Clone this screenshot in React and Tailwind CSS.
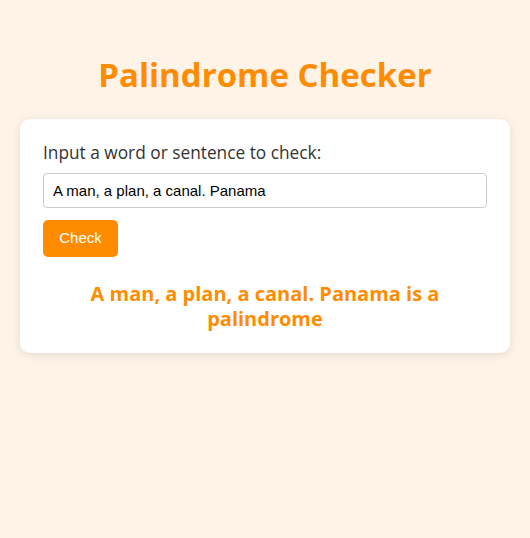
import { useState } from "react";

const isPalindrome = (s) => {
  const clean = s.toLowerCase().replace(/[^a-z0-9]/g, "");
  return clean === clean.split("").reverse().join("");
};

export default function App() {
  const [text, setText] = useState("A man, a plan, a canal. Panama");
  const [result, setResult] = useState(
    "A man, a plan, a canal. Panama is a palindrome"
  );

  const check = () => {
    if (!text.trim()) return;
    setResult(`${text} ${isPalindrome(text) ? "is" : "is not"} a palindrome`);
  };

  return (
    <div className="min-h-[538px] bg-[#fdf3e6] px-5 pt-[53px] font-['Open_Sans',sans-serif]">
      <h1 className="text-center text-[33px] font-bold leading-[44px] text-[#ff8c00]">
        Palindrome Checker
      </h1>
      <div className="mt-[22px] rounded-[10px] bg-white px-[23px] pt-[22px] pb-[22px] shadow-[0_2px_10px_rgba(0,0,0,0.1)]">
        <label className="block text-[17.3px] leading-6 text-[#333]">
          Input a word or sentence to check:
        </label>
        <input
          value={text}
          onChange={(e) => setText(e.target.value)}
          className="mt-[8px] block h-[35px] w-full rounded-[4px] border border-[#ccc] px-[9px] font-['Liberation_Sans',sans-serif] text-[15px] text-black outline-none"
        />
        <button
          onClick={check}
          className="mt-[12px] h-[37px] w-[75px] rounded-[5px] bg-[#ff8c00] font-['Liberation_Sans',sans-serif] text-[15px] text-white"
        >
          Check
        </button>
        <p className="mt-[24px] text-center text-[20px] font-bold leading-[25px] text-[#ff8c00]">
          {result}
        </p>
      </div>
    </div>
  );
}
